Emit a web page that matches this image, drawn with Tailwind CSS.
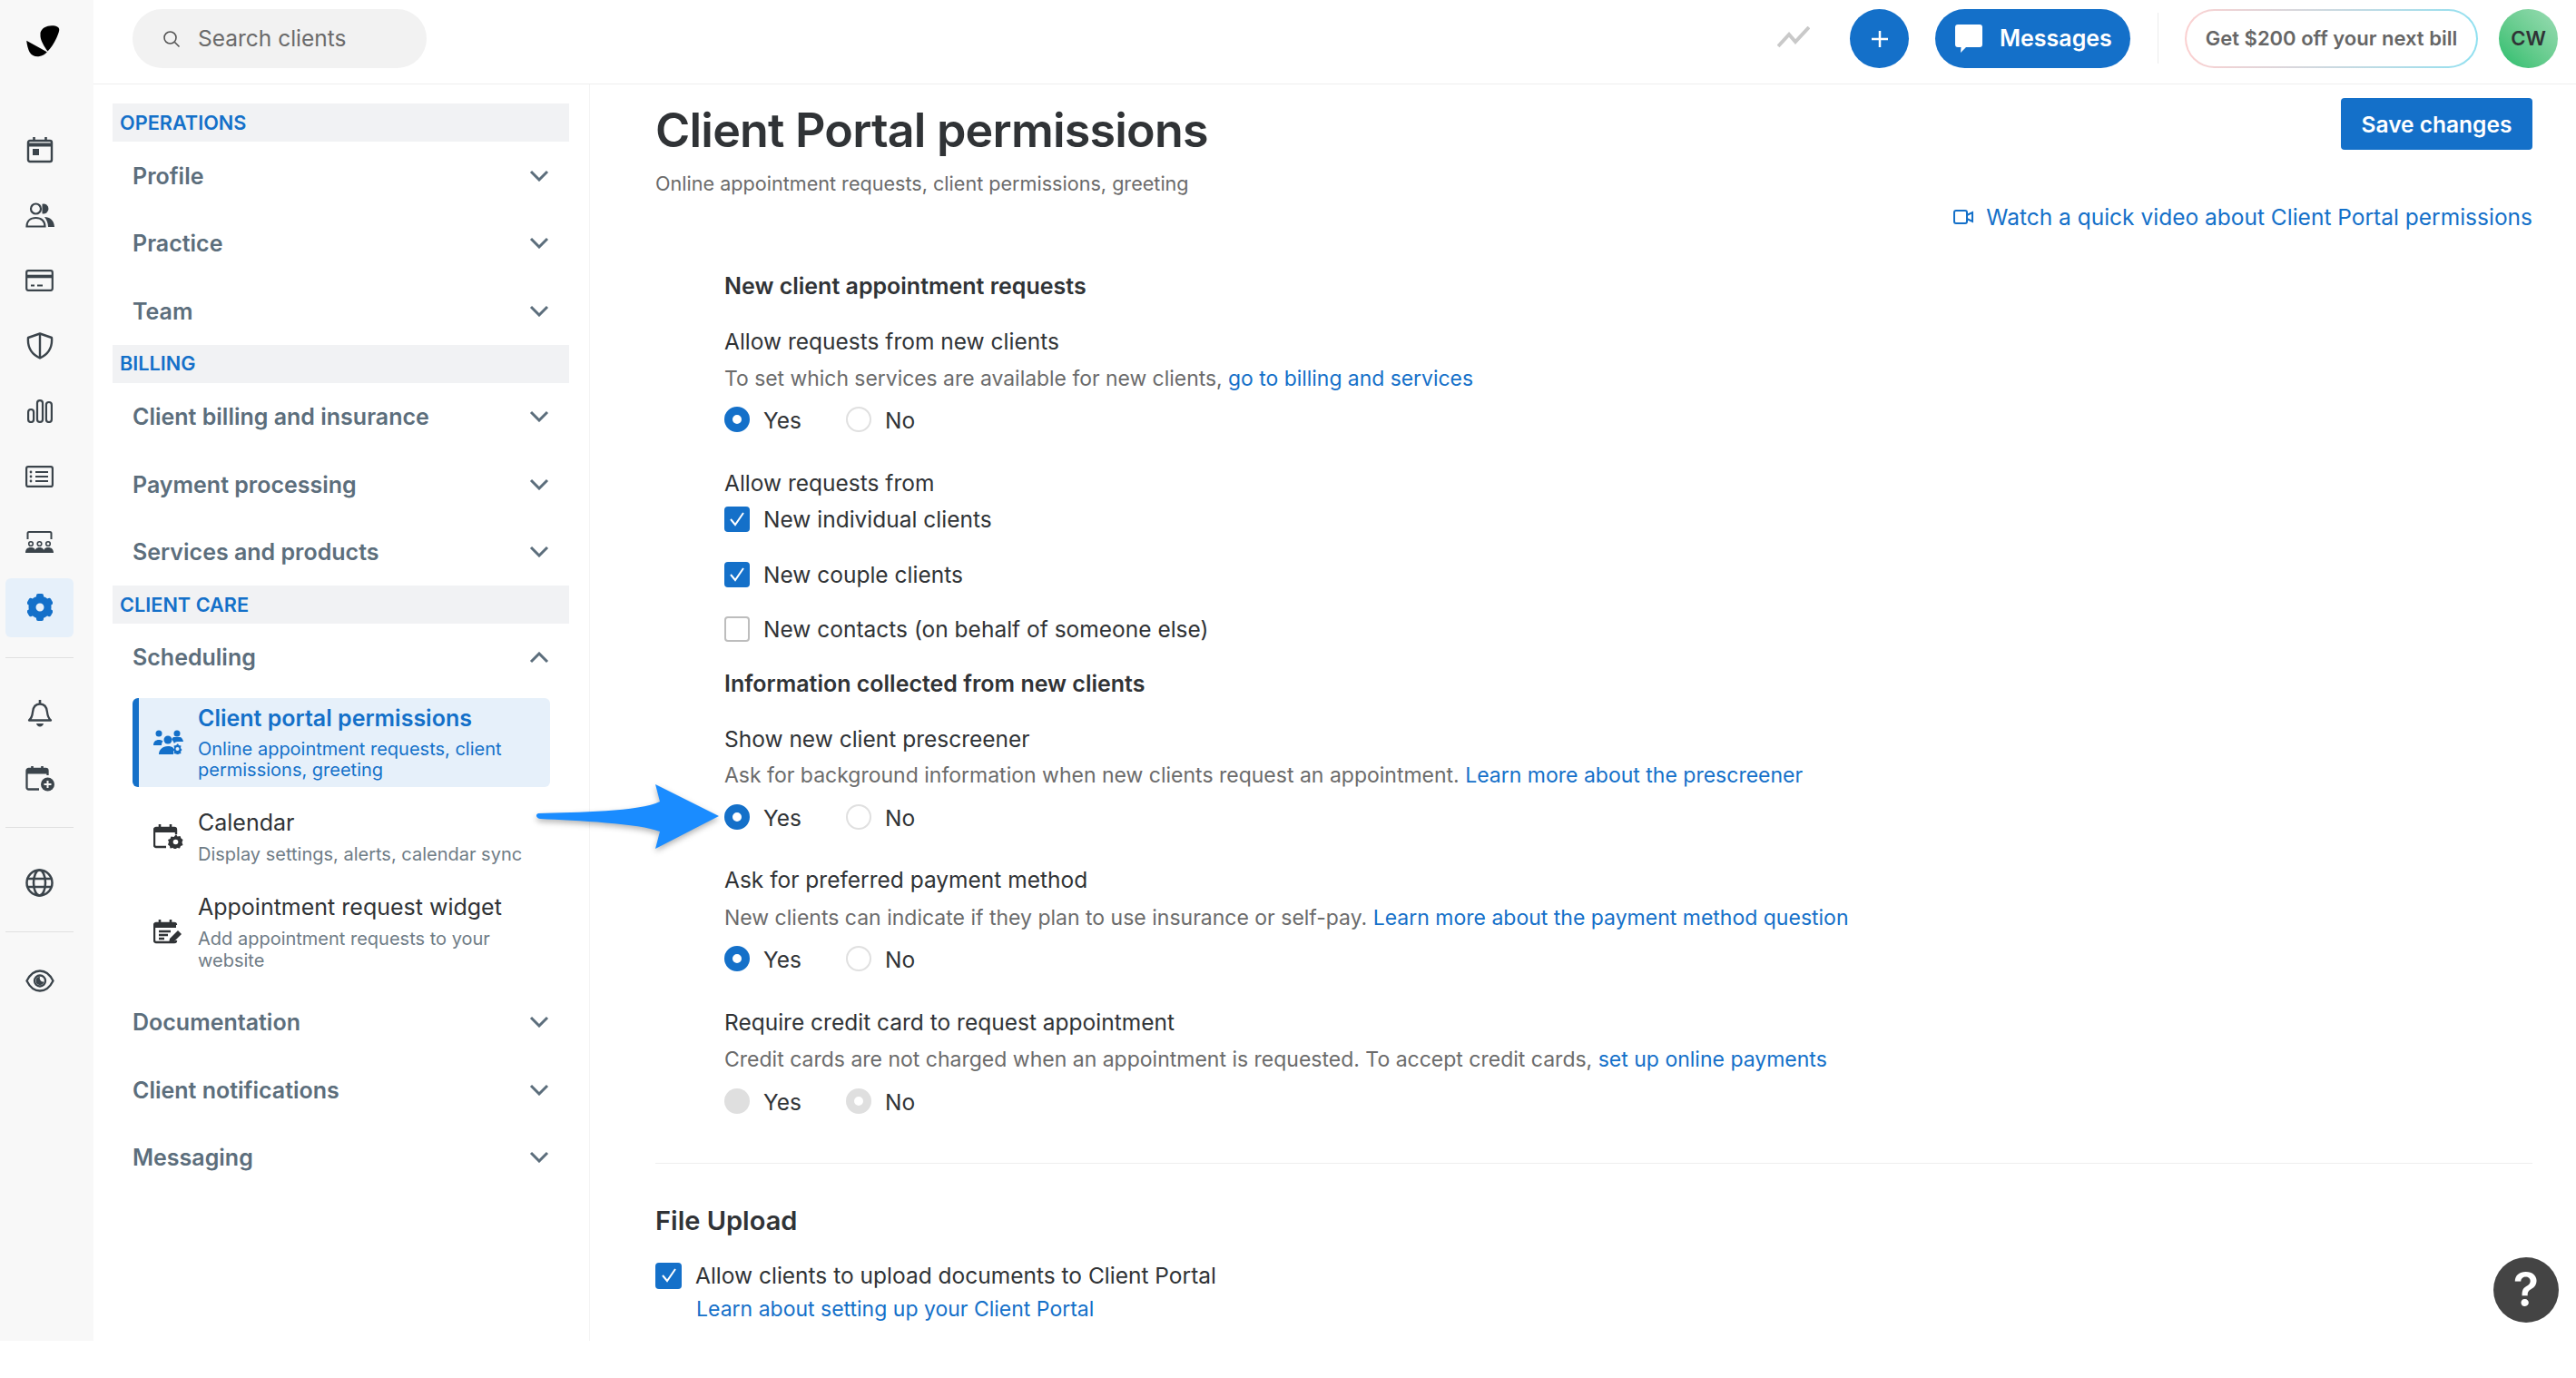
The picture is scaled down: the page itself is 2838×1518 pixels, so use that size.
<!DOCTYPE html>
<html lang="en">
<head>
    <meta charset="UTF-8">
    <title>Client Portal permissions</title>
    <script src="https://cdn.jsdelivr.net/npm/@tailwindcss/browser@4"></script>
</head>
<body class="bg-white font-['Inter',sans-serif] text-[#303336] overflow-hidden">
    <div class="relative h-[1518px] w-[2838px] overflow-hidden">
        <div class="flex h-[1477px]">
            <!-- Icon rail -->
            <nav class="w-[103px] shrink-0 bg-[#f8f8f8] pl-[6px] pr-[22px] text-[#3b444b]">
                <div class="h-[129px] pt-[20px] pl-[14px]">
                    <svg class="w-[60px] h-[50px]" viewBox="0 0 60 50" fill="#000"><path d="M24.500 16C26 11 31 8.500 37 8.300c4-.2 7.500 1 8.200 3.700.4 2-1 5.500-3 10-2.500 5.500-6 11-9.700 14.500C28.500 31 25 25 24.500 20z"/><path d="M9.200 24.800 31.800 37.300c-2 2.500-5 4.500-9.300 4.900-4.500.3-8-1.500-10-5-1.500-3-2.800-7.500-3.300-12.400z"/></svg>
                </div>
                <div class="h-[72px] flex items-center justify-center">
                    <svg class="w-[30px] h-[30px]" viewBox="0 0 30 30" fill="none" stroke="currentColor" stroke-width="2.400"><rect x="2" y="5" width="26" height="23" rx="2"/><path d="M2 9.500h26" stroke-width="4"/><path d="M8.500 1v5M21.500 1v5" stroke-width="2.600"/><rect x="7" y="14" width="7" height="7" fill="currentColor" stroke="none"/></svg>
                </div>
                <div class="h-[72px] flex items-center justify-center">
                    <svg class="w-[32px] h-[28px]" viewBox="0 0 32 28" fill="none" stroke="currentColor" stroke-width="2.200"><circle cx="11.500" cy="7" r="5.500"/><path d="M1.500 26.500c0-6 4-9.500 10-9.500s10 3.500 10 9.500z"/><path d="M18.500 1.700a5.500 5.500 0 1 1 0 10.600z" fill="currentColor" stroke="none"/><path d="M21 16c6 0 10.500 3.500 11 11h-7c0-4-1.500-8-4-11z" fill="currentColor" stroke="none"/></svg>
                </div>
                <div class="h-[72px] flex items-center justify-center">
                    <svg class="w-[31px] h-[24px]" viewBox="0 0 31 24" fill="none" stroke="currentColor" stroke-width="2.200"><rect x="1.200" y="1.200" width="28.600" height="21.600" rx="2"/><path d="M1 7.500h29" stroke-width="3.600"/><path d="M6 17.500h4M13 17.500h6" stroke-width="2"/></svg>
                </div>
                <div class="h-[72px] flex items-center justify-center">
                    <svg class="w-[30px] h-[30px]" viewBox="0 0 30 30" fill="none" stroke="currentColor" stroke-width="2.400" stroke-linejoin="round"><path d="M15 1.500 28 6c.8 10-3 18-13 22.500C5 24 1.200 16 2 6z"/><path d="M15 1.500v27"/></svg>
                </div>
                <div class="h-[72px] flex items-center justify-center">
                    <svg class="w-[28px] h-[26px]" viewBox="0 0 28 26" fill="none" stroke="currentColor" stroke-width="2.200"><rect x="1.100" y="11" width="6" height="14" rx="3"/><rect x="11" y="1.100" width="6" height="23.800" rx="3"/><rect x="20.900" y="3" width="6" height="22" rx="3"/></svg>
                </div>
                <div class="h-[72px] flex items-center justify-center">
                    <svg class="w-[31px] h-[24px]" viewBox="0 0 31 24" fill="none" stroke="currentColor" stroke-width="2.200"><rect x="1.100" y="1.100" width="28.800" height="21.800" rx="2"/><path d="M11 7h14M11 12h14M11 17h14"/><circle cx="6" cy="7" r="1.400" fill="currentColor" stroke="none"/><circle cx="6" cy="12" r="1.400" fill="currentColor" stroke="none"/><circle cx="6" cy="17" r="1.400" fill="currentColor" stroke="none"/></svg>
                </div>
                <div class="h-[72px] flex items-center justify-center">
                    <svg class="w-[31px] h-[24px]" viewBox="0 0 31 24" fill="none" stroke="currentColor" stroke-width="2"><path d="M2.500 9V2.500a1.500 1.500 0 0 1 1.500-1.500h23a1.500 1.500 0 0 1 1.500 1.500V9"/><circle cx="6" cy="14" r="2.300" stroke-width="1.600"/><circle cx="15.500" cy="14" r="2.300" stroke-width="1.600"/><circle cx="25" cy="14" r="2.300" stroke-width="1.600"/><path d="M0 24c0-4 2-6 6-6s5 2 5.500 6zM10 24c.5-4 2-6 5.500-6s5 2 5.500 6zM19.500 24c.5-4 2-6 5.500-6s6 2 6 6z" fill="currentColor" stroke="none"/></svg>
                </div>
                <div class="h-[72px] flex items-center justify-center">
                    <div class="w-full h-[65px] rounded-[6px] bg-[#e6f0fa] flex items-center justify-center">
                        <svg class="w-[28px] h-[30px] text-[#1470c9]" viewBox="0 0 28 30" fill="currentColor"><circle cx="14" cy="15" r="8.500" fill="none" stroke="currentColor" stroke-width="8"/><rect x="10" y="0" width="8" height="7" rx="2"/><rect x="10" y="0" width="8" height="7" rx="2" transform="rotate(60 14 15)"/><rect x="10" y="0" width="8" height="7" rx="2" transform="rotate(120 14 15)"/><rect x="10" y="0" width="8" height="7" rx="2" transform="rotate(180 14 15)"/><rect x="10" y="0" width="8" height="7" rx="2" transform="rotate(240 14 15)"/><rect x="10" y="0" width="8" height="7" rx="2" transform="rotate(300 14 15)"/></svg>
                    </div>
                </div>
                <div class="mt-[19px] border-t border-[#e0e0e0]"></div>
                <div class="mt-[24px] h-[72px] flex items-center justify-center">
                    <svg class="w-[28px] h-[31px]" viewBox="0 0 28 31" fill="none" stroke="currentColor" stroke-width="2.300" stroke-linejoin="round"><path d="M2 23.500c2.500-2 3.500-4.500 4-9 .5-5.500 3.500-9 8-9s7.500 3.500 8 9c.5 4.500 1.500 7 4 9z"/><path d="M14 1v4" stroke-width="2.600"/><path d="M10 27h8c-.5 2-2 3.500-4 3.500S10.500 29 10 27z" fill="currentColor" stroke="none"/></svg>
                </div>
                <div class="h-[72px] flex items-center justify-center">
                    <svg class="w-[32px] h-[29px]" viewBox="0 0 32 29" fill="none" stroke="currentColor" stroke-width="2.300"><path d="M15 26.500H3.500a2 2 0 0 1-2-2V6a2 2 0 0 1 2-2h19a2 2 0 0 1 2 2v5"/><path d="M1.500 5h23v4.500h-23z" fill="currentColor" stroke="none"/><path d="M7.500 1v5M18.500 1v5" stroke-width="2.600"/><circle cx="24.500" cy="21" r="7.500" fill="currentColor" stroke="none"/><path d="M24.500 17v8M20.500 21h8" stroke="#f8f8f8" stroke-width="2"/></svg>
                </div>
                <div class="mt-[18px] border-t border-[#e0e0e0]"></div>
                <div class="mt-[24px] h-[72px] flex items-center justify-center">
                    <svg class="w-[31px] h-[31px]" viewBox="0 0 31 31" fill="none" stroke="currentColor" stroke-width="2.500"><circle cx="15.500" cy="15.500" r="14"/><ellipse cx="15.500" cy="15.500" rx="6.500" ry="14"/><path d="M2.500 11h26M2.500 20h26"/></svg>
                </div>
                <div class="mt-[18px] border-t border-[#e0e0e0]"></div>
                <div class="mt-[17px] h-[72px] flex items-center justify-center">
                    <svg class="w-[32px] h-[25px]" viewBox="0 0 32 25" fill="none" stroke="currentColor" stroke-width="2.300"><path d="M1.500 12.500C5 5.500 10 1.500 16 1.500s11 4 14.500 11C27 19.500 22 23.500 16 23.500S5 19.500 1.500 12.500z"/><circle cx="16" cy="12.500" r="6"/><path d="M16 8a4.500 4.500 0 1 0 4.400 5.500A4 4 0 0 1 16 8z" fill="currentColor" stroke="none"/></svg>
                </div>
            </nav>

            <div class="flex-1 min-w-0 flex flex-col">
                <!-- Top bar -->
                <header class="h-[93px] shrink-0 border-b border-[#efefef] flex items-start pl-[43px] pr-[20px] pt-[10px]">
                    <div class="w-[324px] h-[65px] rounded-full bg-[#f2f2f2] flex items-center pl-[33px]">
                        <svg class="w-[20px] h-[20px] text-[#555]" viewBox="0 0 20 20" fill="none" stroke="currentColor" stroke-width="1.600"><circle cx="8.500" cy="8.500" r="6.500"/><path d="m13.500 13.500 5 5"/></svg>
                        <span class="ml-[19px] text-[24.500px] text-[#6b6b6b]">Search clients</span>
                    </div>
                    <svg class="ml-auto mt-[19px] w-[36px] h-[24px] text-[#c9c9c9]" viewBox="0 0 36 24" fill="none" stroke="currentColor" stroke-width="4"><path d="M1 22 13 9l7 8L35 1"/></svg>
                    <div class="ml-[44px] w-[65px] h-[65px] rounded-full bg-[#1470c9] flex items-center justify-center">
                        <svg class="w-[24px] h-[24px] text-white" viewBox="0 0 24 24" fill="none" stroke="currentColor" stroke-width="2.500"><path d="M12 3v18M3 12h18"/></svg>
                    </div>
                    <div class="ml-[29px] w-[215px] h-[65px] rounded-full bg-[#1470c9] flex items-center pl-[22px] text-white">
                        <svg class="w-[30px] h-[31px]" viewBox="0 0 30 31" fill="currentColor"><path d="M3 0h24a3 3 0 0 1 3 3v19a3 3 0 0 1-3 3H12l-6 6 .5-6H3a3 3 0 0 1-3-3V3a3 3 0 0 1 3-3z"/></svg>
                        <span class="ml-[19px] text-[25px] font-semibold">Messages</span>
                    </div>
                    <div class="ml-[30px] mt-[4px] w-px h-[56px] bg-[#ececec]"></div>
                    <div class="ml-[29px] w-[323px] h-[65px] rounded-full p-[2px] bg-gradient-to-r from-[#fbd0d0] to-[#90e0f0]">
                        <div class="h-full rounded-full bg-white flex items-center justify-center text-[22px] font-semibold text-[#666]">Get $200 off your next bill</div>
                    </div>
                    <div class="ml-[23px] w-[65px] h-[65px] rounded-full bg-gradient-to-bl from-[#9adcb4] to-[#1fbd6c] flex items-center justify-center text-[22px] font-semibold text-[#303336]">CW</div>
                </header>

                <div class="flex flex-1 min-h-0">
                    <!-- Settings sidebar -->
                    <aside class="w-[547px] shrink-0 border-r border-[#f3f3f3] pl-[21px] pr-[22px] pt-[21px]">
                        <div class="h-[42px] bg-[#f1f2f4] pl-[8px] flex items-center text-[21.700px] font-semibold text-[#1470c9]">OPERATIONS</div>
                        <div class="h-[74.500px] pt-[2px] pl-[22px] pr-[22px] flex items-center justify-between text-[25px] font-semibold text-[#5c6e7c]">Profile<svg class="relative -top-[1px] w-[22px] h-[13px]" viewBox="0 0 22 13" fill="none" stroke="#5c6e7c" stroke-width="3"><path d="m2 2 9 9 9-9"/></svg></div>
                        <div class="h-[74.500px] pt-[2px] pl-[22px] pr-[22px] flex items-center justify-between text-[25px] font-semibold text-[#5c6e7c]">Practice<svg class="relative -top-[1px] w-[22px] h-[13px]" viewBox="0 0 22 13" fill="none" stroke="#5c6e7c" stroke-width="3"><path d="m2 2 9 9 9-9"/></svg></div>
                        <div class="h-[74.500px] pt-[2px] pl-[22px] pr-[22px] flex items-center justify-between text-[25px] font-semibold text-[#5c6e7c]">Team<svg class="relative -top-[1px] w-[22px] h-[13px]" viewBox="0 0 22 13" fill="none" stroke="#5c6e7c" stroke-width="3"><path d="m2 2 9 9 9-9"/></svg></div>
                        <div class="h-[42px] bg-[#f1f2f4] pl-[8px] flex items-center text-[21.700px] font-semibold text-[#1470c9]">BILLING</div>
                        <div class="h-[74.500px] pt-[2px] pl-[22px] pr-[22px] flex items-center justify-between text-[25px] font-semibold text-[#5c6e7c]">Client billing and insurance<svg class="relative -top-[1px] w-[22px] h-[13px]" viewBox="0 0 22 13" fill="none" stroke="#5c6e7c" stroke-width="3"><path d="m2 2 9 9 9-9"/></svg></div>
                        <div class="h-[74.500px] pt-[2px] pl-[22px] pr-[22px] flex items-center justify-between text-[25px] font-semibold text-[#5c6e7c]">Payment processing<svg class="relative -top-[1px] w-[22px] h-[13px]" viewBox="0 0 22 13" fill="none" stroke="#5c6e7c" stroke-width="3"><path d="m2 2 9 9 9-9"/></svg></div>
                        <div class="h-[74.500px] pt-[2px] pl-[22px] pr-[22px] flex items-center justify-between text-[25px] font-semibold text-[#5c6e7c]">Services and products<svg class="relative -top-[1px] w-[22px] h-[13px]" viewBox="0 0 22 13" fill="none" stroke="#5c6e7c" stroke-width="3"><path d="m2 2 9 9 9-9"/></svg></div>
                        <div class="h-[42px] bg-[#f1f2f4] pl-[8px] flex items-center text-[21.700px] font-semibold text-[#1470c9]">CLIENT CARE</div>
                        <div class="h-[74.500px] pl-[22px] pr-[22px] flex items-center justify-between text-[25px] font-semibold text-[#5c6e7c]">Scheduling<svg class="w-[22px] h-[13px]" viewBox="0 0 22 13" fill="none" stroke="#5c6e7c" stroke-width="3"><path d="m2 11 9-9 9 9"/></svg></div>

                        <div class="ml-[22px] mr-[21px] mt-[7px] h-[98px] rounded-[6px] border-l-[7px] border-[#1470c9] bg-[#e6f0fa] flex items-center pl-[16px] text-[#1470c9]">
                            <svg class="w-[33px] h-[27px] shrink-0" viewBox="0 0 33 27" fill="currentColor"><circle cx="6" cy="4" r="3.500"/><circle cx="26" cy="4" r="3.500"/><circle cx="16" cy="11" r="4.500"/><path d="M0 17c0-4 2.500-6 6-6 2 0 3.500.5 4.500 1.500-1 1-1.500 2.500-1.500 4.500zM6 27c0-5 4-9 10-9 2.500 0 4.500.5 6 2v7z"/><path d="M22 8h7c2 0 3.500 2 4 5h-5c-1.500 0-4 0-5 2-1-2-2-4-3-5 1 0 1.500-2 2-2z"/><path d="M27 15l1 2 2.500.5-.5 2.500 1.500 2-1.500 2 .5 2-2.500.5-1 1-2-1-2.500-.5.5-2-1.500-2 1.500-2-.5-2.500 2.500-.5z"/><circle cx="26.500" cy="21" r="2" fill="#e6f0fa"/></svg>
                            <div class="ml-[16px]">
                                <div class="text-[25px] leading-[31px] font-semibold">Client portal permissions</div>
                                <div class="text-[20px] leading-[23px] mt-[7px]">Online appointment requests, client<br>permissions, greeting</div>
                            </div>
                        </div>
                        <div class="ml-[22px] mt-[24px] h-[62px] flex items-center pl-[23px]">
                            <svg class="w-[33px] h-[27px] shrink-0 text-[#303336]" viewBox="0 0 33 27" fill="none" stroke="currentColor" stroke-width="2.400"><path d="M14 25H3a2 2 0 0 1-2-2V6a2 2 0 0 1 2-2h20a2 2 0 0 1 2 2v5"/><path d="M1 5h24v4H1z" fill="currentColor" stroke="none"/><path d="M7 0v5M19 0v5" stroke-width="2.600"/><path d="M25 11l1.500 2.500 3-.5 1 2.500 2 1.500-1 3 1 3-2.500 1-1 2.500-3-.5-2 2-2.500-2-3 .5-.5-2.500-2-1.500 1-3-1-2.500 2.500-1 1-2.500 3 .5z" fill="currentColor" stroke="none"/><circle cx="24.500" cy="19.500" r="2.800" fill="#fff" stroke="none"/></svg>
                            <div class="ml-[16px]">
                                <div class="text-[25px] leading-[31px]">Calendar</div>
                                <div class="text-[20px] leading-[23px] mt-[8px] text-[#6f7c86]">Display settings, alerts, calendar sync</div>
                            </div>
                        </div>
                        <div class="ml-[22px] mt-[31px] h-[86px] flex items-center pl-[23px]">
                            <svg class="w-[33px] h-[27px] shrink-0 text-[#303336]" viewBox="0 0 33 27" fill="none" stroke="currentColor" stroke-width="2.400"><path d="M25 23a2 2 0 0 1-2 2H3a2 2 0 0 1-2-2V6a2 2 0 0 1 2-2h20a2 2 0 0 1 2 2"/><path d="M1 5h24v4H1z" fill="currentColor" stroke="none"/><path d="M7 0v5M19 0v5" stroke-width="2.600"/><path d="M6 13h13M6 17h10M6 21h6"/><path d="m17 26 1-5 9-9 4 4-9 9z" fill="currentColor" stroke="none"/></svg>
                            <div class="ml-[16px]">
                                <div class="text-[25px] leading-[31px]">Appointment request widget</div>
                                <div class="text-[20px] leading-[24px] mt-[7px] text-[#6f7c86]">Add appointment requests to your<br>website</div>
                            </div>
                        </div>
                        <div class="h-[74.500px] mt-[19px] pt-[2px] pl-[22px] pr-[22px] flex items-center justify-between text-[25px] font-semibold text-[#5c6e7c]">Documentation<svg class="relative -top-[1px] w-[22px] h-[13px]" viewBox="0 0 22 13" fill="none" stroke="#5c6e7c" stroke-width="3"><path d="m2 2 9 9 9-9"/></svg></div>
                        <div class="h-[74.500px] pt-[2px] pl-[22px] pr-[22px] flex items-center justify-between text-[25px] font-semibold text-[#5c6e7c]">Client notifications<svg class="relative -top-[1px] w-[22px] h-[13px]" viewBox="0 0 22 13" fill="none" stroke="#5c6e7c" stroke-width="3"><path d="m2 2 9 9 9-9"/></svg></div>
                        <div class="h-[74.500px] pt-[2px] pl-[22px] pr-[22px] flex items-center justify-between text-[25px] font-semibold text-[#5c6e7c]">Messaging<svg class="relative -top-[1px] w-[22px] h-[13px]" viewBox="0 0 22 13" fill="none" stroke="#5c6e7c" stroke-width="3"><path d="m2 2 9 9 9-9"/></svg></div>
                    </aside>

                    <!-- Main content -->
                    <main class="flex-1 min-w-0 pl-[72px] pr-[48px]">
                        <div class="flex justify-between items-start h-[130px]">
                            <div>
                                <h1 class="mt-[18px] text-[52px] leading-[66px] font-semibold tracking-[-0.800px] text-[#303336]">Client Portal permissions</h1>
                                <p class="mt-[11px] text-[21.600px] leading-[28px] text-[#6b6b6b]">Online appointment requests, client permissions, greeting</p>
                            </div>
                            <button class="mt-[15px] pt-[2px] w-[211px] h-[57px] rounded-[4px] bg-[#1470c9] text-white text-[24.500px] font-semibold">Save changes</button>
                        </div>
                        <div class="flex justify-end items-center h-[34px] -mt-[1px] text-[24.500px] text-[#1470c9]">
                            <svg class="w-[22px] h-[16px] mr-[14px]" viewBox="0 0 22 16" fill="none" stroke="currentColor" stroke-width="2"><rect x="1" y="1" width="14" height="14" rx="2"/><path d="m15 6 6-3v10l-6-3"/></svg>
                            Watch a quick video about Client Portal permissions
                        </div>

                        <div class="pl-[76px]">
                            <h2 class="mt-[44px] h-[30px] leading-[30px] text-[25px] font-semibold">New client appointment requests</h2>

                            <div class="mt-[31px] h-[30px] leading-[30px] text-[24.500px]">Allow requests from new clients</div>
                            <div class="mt-[11px] h-[30px] leading-[30px] text-[22.900px] text-[#6b6b6b]">To set which services are available for new clients, <span class="text-[#1470c9]">go to billing and services</span></div>
                            <div class="mt-[15px] h-[30px] flex items-center text-[24.500px]">
                                <span class="w-[28px] h-[28px] rounded-full border-[9px] border-[#1470c9] bg-white"></span><span class="ml-[15px] pt-[2px] w-[91px]">Yes</span>
                                <span class="w-[28px] h-[28px] rounded-full border-2 border-[#e0e0e0] bg-white"></span><span class="ml-[15px] pt-[2px]">No</span>
                            </div>

                            <div class="mt-[40px] h-[30px] leading-[30px] text-[24.500px]">Allow requests from</div>
                            <div class="mt-[10px] h-[30px] flex items-center text-[24.500px]">
                                <span class="w-[28px] h-[28px] rounded-[4px] bg-[#1470c9] flex items-center justify-center"><svg class="w-[18px] h-[16px]" viewBox="0 0 18 16" fill="none" stroke="#fff" stroke-width="2"><path d="m2 8 5 6 9-13"/></svg></span><span class="ml-[15px]">New individual clients</span>
                            </div>
                            <div class="mt-[31px] h-[30px] flex items-center text-[24.500px]">
                                <span class="w-[28px] h-[28px] rounded-[4px] bg-[#1470c9] flex items-center justify-center"><svg class="w-[18px] h-[16px]" viewBox="0 0 18 16" fill="none" stroke="#fff" stroke-width="2"><path d="m2 8 5 6 9-13"/></svg></span><span class="ml-[15px]">New couple clients</span>
                            </div>
                            <div class="mt-[30px] h-[30px] flex items-center text-[24.500px]">
                                <span class="w-[28px] h-[28px] rounded-[4px] border-2 border-[#bdbdbd] bg-white"></span><span class="ml-[15px]">New contacts (on behalf of someone else)</span>
                            </div>

                            <h2 class="mt-[30px] h-[30px] leading-[30px] text-[25px] font-semibold">Information collected from new clients</h2>

                            <div class="mt-[31px] h-[30px] leading-[30px] text-[24.500px]">Show new client prescreener</div>
                            <div class="mt-[10px] h-[30px] leading-[30px] text-[23px] text-[#6b6b6b]">Ask for background information when new clients request an appointment. <span class="text-[#1470c9]">Learn more about the prescreener</span></div>
                            <div class="mt-[16px] h-[30px] flex items-center text-[24.500px]">
                                <span class="w-[28px] h-[28px] rounded-full border-[9px] border-[#1470c9] bg-white"></span><span class="ml-[15px] pt-[2px] w-[91px]">Yes</span>
                                <span class="w-[28px] h-[28px] rounded-full border-2 border-[#e0e0e0] bg-white"></span><span class="ml-[15px] pt-[2px]">No</span>
                            </div>

                            <div class="mt-[39px] h-[30px] leading-[30px] text-[24.500px]">Ask for preferred payment method</div>
                            <div class="mt-[12px] h-[30px] leading-[30px] text-[23px] text-[#6b6b6b]">New clients can indicate if they plan to use insurance or self-pay. <span class="text-[#1470c9]">Learn more about the payment method question</span></div>
                            <div class="mt-[15px] h-[30px] flex items-center text-[24.500px]">
                                <span class="w-[28px] h-[28px] rounded-full border-[9px] border-[#1470c9] bg-white"></span><span class="ml-[15px] pt-[2px] w-[91px]">Yes</span>
                                <span class="w-[28px] h-[28px] rounded-full border-2 border-[#e0e0e0] bg-white"></span><span class="ml-[15px] pt-[2px]">No</span>
                            </div>

                            <div class="mt-[40px] h-[30px] leading-[30px] text-[24.500px]">Require credit card to request appointment</div>
                            <div class="mt-[11px] h-[30px] leading-[30px] text-[23px] text-[#6b6b6b]">Credit cards are not charged when an appointment is requested. To accept credit cards, <span class="text-[#1470c9]">set up online payments</span></div>
                            <div class="mt-[16px] h-[30px] flex items-center text-[24.500px]">
                                <span class="w-[28px] h-[28px] rounded-full bg-[#dfdfdf]"></span><span class="ml-[15px] pt-[2px] w-[91px]">Yes</span>
                                <span class="w-[28px] h-[28px] rounded-full border-[9px] border-[#dfdfdf] bg-white"></span><span class="ml-[15px] pt-[2px]">No</span>
                            </div>
                        </div>

                        <div class="mt-[53px] border-t border-[#efefef]"></div>
                        <h2 class="mt-[46px] h-[34px] leading-[34px] text-[29px] font-semibold">File Upload</h2>
                        <div class="mt-[28px] h-[30px] flex items-center text-[24.500px]">
                            <span class="w-[29px] h-[29px] rounded-[4px] bg-[#1470c9] flex items-center justify-center"><svg class="w-[18px] h-[16px]" viewBox="0 0 18 16" fill="none" stroke="#fff" stroke-width="2"><path d="m2 8 5 6 9-13"/></svg></span><span class="ml-[15px]">Allow clients to upload documents to Client Portal</span>
                        </div>
                        <div class="mt-[7px] ml-[45px] h-[30px] leading-[30px] text-[23px] text-[#1470c9]">Learn about setting up your Client Portal</div>
                    </main>
                </div>
            </div>
        </div>

        <!-- Help button -->
        <div class="absolute left-[2747px] top-[1385px] w-[72px] h-[72px] rounded-full bg-[#444] flex items-center justify-center text-white text-[52px] font-semibold">?</div>

        <!-- Annotation arrow -->
        <svg class="absolute left-[585px] top-[855px] w-[215px] h-[90px]" viewBox="0 0 215 90" style="filter: drop-shadow(0 3px 3px rgba(0,0,0,.3))"><path d="M8 41 C50 40 120 39 142 28 L137 9 L207 44 L137 80 L142 61 C120 52 50 49 10 47 C5 46 5 42 8 41z" fill="#1a8cff"/></svg>
    </div>
</body>
</html>
